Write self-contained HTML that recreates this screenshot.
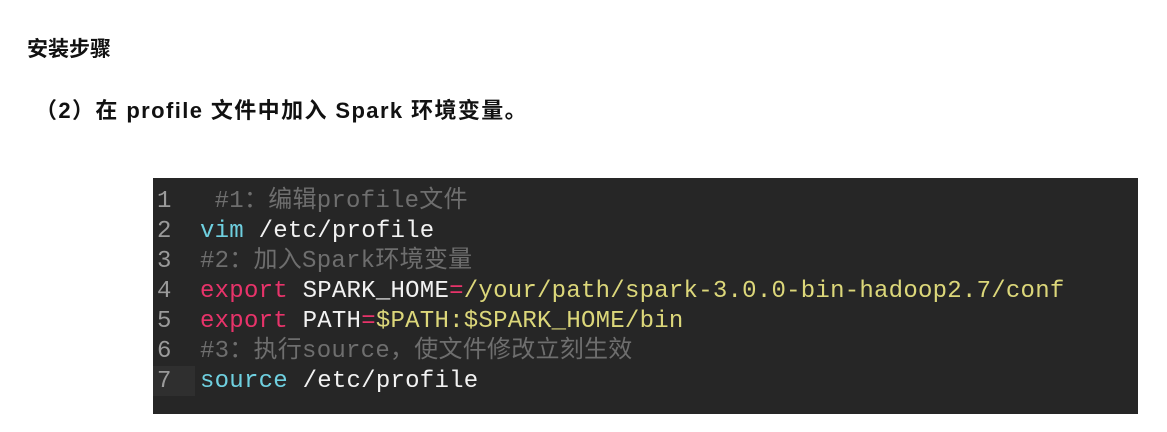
<!DOCTYPE html>
<html><head><meta charset="utf-8"><style>
body{margin:0;width:1167px;height:432px;background:#fff;overflow:hidden;position:relative;font-family:"Liberation Sans","Noto Sans CJK SC",sans-serif;}
.h1{position:absolute;left:27px;top:33px;font-size:21px;font-weight:bold;color:#111;}
.h2{position:absolute;left:35px;top:93px;font-size:22px;letter-spacing:1.4px;font-weight:bold;color:#111;}
.code{position:absolute;left:153px;top:178px;width:985px;height:236px;background:#262626;}
.ln{position:absolute;left:4px;font-family:"Liberation Mono",monospace;font-size:24px;color:#9a9a9a;line-height:30px;}
.l{position:absolute;left:47px;font-family:"Liberation Mono","Noto Sans CJK SC",monospace;font-size:24px;letter-spacing:0.25px;color:#f2f2f2;white-space:pre;line-height:30px;}
.c{color:#6e6e6e}.k{color:#6fd0e0}.r{color:#e8336a}.y{color:#dcd77a}
.cur{position:absolute;left:0;top:188px;width:42px;height:30px;background:#2f2f2f;}
</style></head><body>
<div class="h1">安装步骤</div>
<div class="h2">（2）在 profile 文件中加入 Spark 环境变量。</div>
<div class="code">
<div class="cur"></div>
<div class="ln" style="top:9px">1</div>
<div class="ln" style="top:39px">2</div>
<div class="ln" style="top:69px">3</div>
<div class="ln" style="top:99px">4</div>
<div class="ln" style="top:129px">5</div>
<div class="ln" style="top:159px">6</div>
<div class="ln" style="top:189px">7</div>
<div class="l c" style="top:9px"> #1：编辑profile文件</div>
<div class="l" style="top:39px"><span class="k">vim</span> /etc/profile</div>
<div class="l c" style="top:69px">#2：加入Spark环境变量</div>
<div class="l" style="top:99px"><span class="r">export</span> SPARK_HOME<span class="r">=</span><span class="y">/your/path/spark-3.0.0-bin-hadoop2.7/conf</span></div>
<div class="l" style="top:129px"><span class="r">export</span> PATH<span class="r">=</span><span class="y">$PATH:$SPARK_HOME/bin</span></div>
<div class="l c" style="top:159px">#3：执行source，使文件修改立刻生效</div>
<div class="l" style="top:189px"><span class="k">source</span> /etc/profile</div>
</div>
</body></html>
